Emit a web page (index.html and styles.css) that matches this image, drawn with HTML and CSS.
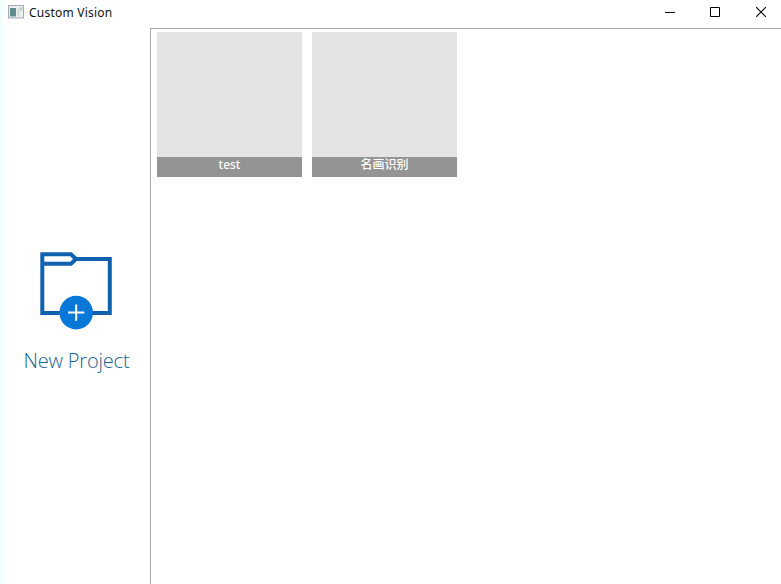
FILE: index.html
```
<!DOCTYPE html>
<html lang="en">
<head>
<meta charset="utf-8">
<title>Custom Vision</title>
<link rel="stylesheet" href="styles.css">
</head>
<body>
<div class="window">
  <header class="titlebar">
    <svg class="app-icon" width="16" height="14" viewBox="0 0 16 14">
      <rect x=".5" y=".5" width="15" height="12.5" fill="#edf0f1" stroke="#a5a9b5"/>
      <rect x="2" y="3" width="6" height="8.5" fill="#5b8e8b"/>
      <rect x="9" y="3" width="2.5" height="8.5" fill="#cfe0d8"/>
      <rect x="12" y="2.5" width="2" height="3" fill="#a9c5ad"/>
    </svg>
    <h1 class="title">Custom Vision</h1>
    <div class="controls">
      <svg width="10" height="10" viewBox="0 0 10 10"><path d="M0 5.5H10" stroke="#000"/></svg>
      <svg width="10" height="10" viewBox="0 0 10 10"><path d="M.5 .5H9.5V9.5H.5Z" fill="none" stroke="#000"/></svg>
      <svg class="close" width="10" height="10" viewBox="0 0 10 10"><path d="M0 0L10 10M10 0L0 10" stroke="#000" stroke-width="1.1"/></svg>
    </div>
  </header>
  <div class="body">
    <aside class="sidebar">
      <svg width="73" height="79" viewBox="0 0 73 79">
        <g fill="none" stroke="#1062ae" stroke-width="4">
          <path d="M2.3 2.3H31L36 7H69.8V61H2.3Z"/>
          <path d="M2.3 11.8H31L36 7"/>
        </g>
        <circle cx="36.2" cy="60.6" r="16.8" fill="#0878d8"/>
        <path d="M28 60.6H44.4M36.2 52.4V68.8" stroke="#fff" stroke-width="2"/>
      </svg>
      <span class="new-label">New Project</span>
    </aside>
    <main class="projects">
      <div class="tile"><span class="tile-name">test</span></div>
      <div class="tile"><span class="tile-name">名画识别</span></div>
    </main>
  </div>
</div>
</body>
</html>
```
FILE: styles.css
```
* { box-sizing: border-box; }
body { margin: 0; background: #fff; font-family: "Noto Sans", "Noto Sans CJK SC", sans-serif; }
.window { height: 584px; display: flex; flex-direction: column; overflow: hidden; background: linear-gradient(90deg, #effdff 0, #f9ffff 3px, #fff 6px); }
.titlebar { height: 28px; display: flex; align-items: flex-start; padding: 5px 15px 0 8px; }
.app-icon { display: block; }
.title { margin: 0 0 0 5px; font-size: 12px; line-height: 16px; font-weight: 400; letter-spacing: .22px; color: #111; }
.controls { margin-left: auto; display: flex; gap: 35px; padding-top: 2px; }
.controls svg { display: block; }
.controls .close { margin-left: 1px; }
.body { flex: 1; display: flex; }
.sidebar { width: 150px; display: flex; flex-direction: column; align-items: center; padding: 224px 0 0 3px; }
.sidebar svg { display: block; }
.new-label { margin-top: 16px; font-family: "Open Sans", sans-serif; font-weight: 300; font-size: 20px; line-height: 28px; letter-spacing: -.2px; white-space: nowrap; color: #1b6391; }
.projects { flex: 1; display: flex; align-items: flex-start; gap: 10px; padding: 3px 0 0 6px; border: solid #ababab; border-width: 1px 0 0 1px; background: #fff; }
.tile { width: 145px; height: 145px; display: flex; align-items: flex-end; background: #e4e4e4; }
.tile-name { width: 100%; height: 20px; background: #949494; color: #fff; font-size: 12px; line-height: 16px; font-weight: 500; text-align: center; }
```
